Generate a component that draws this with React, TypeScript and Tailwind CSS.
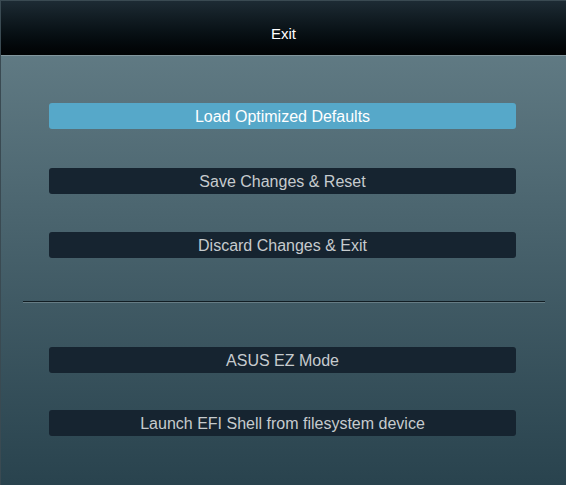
const items = [
  { label: "Load Optimized Defaults", active: true, mt: "mt-0" },
  { label: "Save Changes & Reset", mt: "mt-[39px]" },
  { label: "Discard Changes & Exit", mt: "mt-[38px]" },
];

const extras = [
  { label: "ASUS EZ Mode", mt: "mt-[44px]" },
  { label: "Launch EFI Shell from filesystem device", mt: "mt-[37px]" },
];

function MenuButton({ label, active, mt }: { label: string; active?: boolean; mt: string }) {
  return (
    <button
      className={`${mt} flex h-[26px] w-full items-center justify-center rounded-[3px] pt-[2px] text-[16px] leading-none ${
        active ? "bg-[#56a8c9] text-white" : "bg-[#162430] text-[#c6cbce]"
      }`}
    >
      {label}
    </button>
  );
}

export default function App() {
  return (
    <div
      className="flex h-[485px] w-[566px] flex-col overflow-hidden border-l border-t border-[#3a4a52] bg-gradient-to-b from-[#67818a] to-[#29434e]"
      style={{ fontFamily: '"Liberation Sans", Arial, sans-serif' }}
    >
      {/* Header */}
      <div className="flex h-[55px] shrink-0 justify-center border-b border-[#82969d] bg-gradient-to-b from-[#1d2b34] to-[#010304] pt-[24px] text-[15px] leading-[18px] text-white">
        Exit
      </div>

      {/* Body */}
      <div className="flex flex-col pl-[48px] pr-[50px] pt-[47px]">
        {items.map((it) => (
          <MenuButton key={it.label} label={it.label} active={it.active} mt={it.mt} />
        ))}

        {/* Divider */}
        <div className="-ml-[26px] -mr-[29px] mt-[43px] flex flex-col">
          <div className="h-px bg-[#111d23]" />
          <div className="h-px bg-[#667c84]" />
        </div>

        {extras.map((it) => (
          <MenuButton key={it.label} label={it.label} mt={it.mt} />
        ))}
      </div>
    </div>
  );
}
